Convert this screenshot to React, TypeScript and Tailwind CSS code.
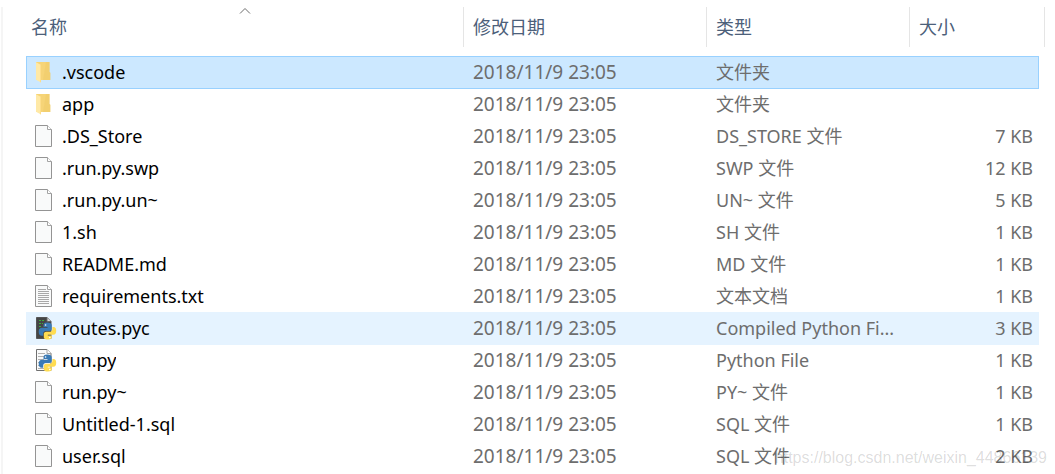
import React from "react";

type Kind = "folder" | "file" | "text" | "pyc" | "py";

interface Entry {
  name: string;
  kind: Kind;
  type: string;
  size: string;
  state?: "selected" | "hover";
}

const MODIFIED = "2018/11/9 23:05";

const entries: Entry[] = [
  { name: ".vscode", kind: "folder", type: "文件夹", size: "", state: "selected" },
  { name: "app", kind: "folder", type: "文件夹", size: "" },
  { name: ".DS_Store", kind: "file", type: "DS_STORE 文件", size: "7 KB" },
  { name: ".run.py.swp", kind: "file", type: "SWP 文件", size: "12 KB" },
  { name: ".run.py.un~", kind: "file", type: "UN~ 文件", size: "5 KB" },
  { name: "1.sh", kind: "file", type: "SH 文件", size: "1 KB" },
  { name: "README.md", kind: "file", type: "MD 文件", size: "1 KB" },
  { name: "requirements.txt", kind: "text", type: "文本文档", size: "1 KB" },
  { name: "routes.pyc", kind: "pyc", type: "Compiled Python Fi...", size: "3 KB", state: "hover" },
  { name: "run.py", kind: "py", type: "Python File", size: "1 KB" },
  { name: "run.py~", kind: "file", type: "PY~ 文件", size: "1 KB" },
  { name: "Untitled-1.sql", kind: "file", type: "SQL 文件", size: "1 KB" },
  { name: "user.sql", kind: "file", type: "SQL 文件", size: "2 KB" },
];

function FolderIcon() {
  return (
    <svg viewBox="0 0 20 24" className="h-6 w-5" aria-hidden="true">
      <path d="M1 2h13.500v10l.8.8v7.200H1z" fill="#f6d477" />
      <path d="M11 2h3.500v10l.8.8v7.200H8z" fill="#efcb69" opacity=".55" />
      <path d="M1 2.200 6 5v17.500L1 19.800z" fill="#ffe9a6" />
      <path d="M6 5v17.500l-1-.6V4.400z" fill="#fdde8c" />
    </svg>
  );
}

function PythonMark() {
  return (
    <g>
      <path
        d="M12.300 6.500c-3 0-3.800 1.200-3.800 2.700V11h4v.8H7c-2 0-3.300 1.500-3.300 4s1.200 3.900 3 3.900h1.500v-2.200c0-1.500 1.200-2.600 2.700-2.600h3.600c1.300 0 2.200-1 2.200-2.200V9.200c0-1.700-1.700-2.700-4.400-2.700z"
        fill="#3a7ab5"
      />
      <path
        d="M13 23.500c3 0 3.800-1.200 3.800-2.300v-1.700h-4v-.8h5.600c1.800 0 2.800-1.500 2.800-4s-1-3.700-2.600-3.700h-1.200v2.200c0 1.500-1.200 2.600-2.700 2.600h-3.600c-1.300 0-2.300 1-2.300 2.200v3.200c0 1.700 1.500 2.300 4.200 2.300z"
        fill="#ffdc51"
      />
      <circle cx="10.600" cy="9" r=".8" fill="#fff" />
      <circle cx="14.800" cy="21.500" r=".8" fill="#fff" />
    </g>
  );
}

function PageIcon({ kind }: { kind: Kind }) {
  const dark = kind === "pyc";
  const python = kind === "py" || dark;
  return (
    <svg viewBox="0 0 22 24" className="h-6 w-[22px]" aria-hidden="true">
      <path
        d={python ? "M1.500 1.500h10.500l4 4v17h-14.500z" : "M.5 1.500h12l4 4v17H.5z"}
        fill={dark ? "#454545" : "#f9fafa"}
        stroke={dark ? "#555" : python ? "#707070" : "#949494"}
      />
      <path
        d={python ? "M12 1.500v4h4" : "M12.500 1.500v4h4"}
        fill={dark ? "#d8d8d8" : "#fff"}
        stroke={dark ? "#666" : "#a3a3a3"}
      />
      {kind === "text" && (
        <path d="M3 5.500h8M3 7.500h11M3 9.500h11M3 11.500h11M3 13.500h11M3 15.500h11M3 17.500h11M3 19.500h11" stroke="#a8a8a8" />
      )}
      {kind === "py" && <path d="M3 5.500h7M3 8.500h10M3 11.500h6M3 14.500h3M3 17.500h3M3 20.500h6" stroke="#b0b0b0" />}
      {dark && (
        <path d="M4 4.500h6M4 7.500h4M4 10.500h3M4 13.500h2" stroke="#3fae3f" strokeDasharray="2 1" />
      )}
      {python && <PythonMark />}
    </svg>
  );
}

const rowFill = {
  selected:
    "bg-[#cce8ff] shadow-[inset_0_1px_0_#99d1ff,0_1px_0_#99d1ff] first:shadow-[inset_1px_1px_0_#99d1ff,0_1px_0_#99d1ff] nth-4:shadow-[inset_-1px_1px_0_#99d1ff,0_1px_0_#99d1ff]",
  hover: "bg-[#e5f3ff] shadow-[0_1px_0_#e5f3ff]",
  none: "",
};

function Row({ entry }: { entry: Entry }) {
  const fill = rowFill[entry.state ?? "none"];
  return (
    <tr className="h-8 text-[#6d6d6d]">
      <td className={`p-0 ${fill}`}>
        <div className="flex items-center pl-[9px] text-black">
          <span className="flex w-[27px] shrink-0">
            {entry.kind === "folder" ? <FolderIcon /> : <PageIcon kind={entry.kind} />}
          </span>
          <span className="truncate">{entry.name}</span>
        </div>
      </td>
      <td className={`truncate py-0 pr-2 pl-[9px] text-[19px] ${fill}`}>{MODIFIED}</td>
      <td className={`truncate py-0 pr-2 pl-[9px] ${fill}`}>{entry.type}</td>
      <td className={`truncate py-0 pr-1.5 pl-[9px] text-right ${fill}`}>{entry.size}</td>
    </tr>
  );
}

const heading = "border-r border-[#e5e5e5] py-0 pr-2 text-left font-normal";

export default function App() {
  return (
    <div className="bg-white pt-[7px] font-['Noto_Sans','Noto_Sans_CJK_SC',sans-serif] text-[18px] leading-6">
      <main className="relative ml-px overflow-hidden border-l-2 border-[#f5f5f5] pr-2.5 pb-0.5 pl-[23px]">
        <table className="w-full table-fixed border-separate border-spacing-0">
          <colgroup>
            <col />
            <col className="w-[243px]" />
            <col className="w-[203px]" />
            <col className="w-[129px]" />
            <col className="w-1.5" />
          </colgroup>
          <thead className="text-[#4c607a]">
            <tr className="h-10">
              <th scope="col" aria-sort="ascending" className={`relative pl-[5px] ${heading}`}>
                名称
                <svg viewBox="0 0 12 7" className="absolute top-0 left-1/2 h-[7px] w-3 -translate-x-1/2" aria-hidden="true">
                  <path d="M1 6.500l5-5 5 5" fill="none" stroke="#6d6d6d" />
                </svg>
              </th>
              <th scope="col" className={`pl-[9px] ${heading}`}>修改日期</th>
              <th scope="col" className={`pl-[9px] ${heading}`}>类型</th>
              <th scope="col" className="py-0 pl-[9px] text-left font-normal">大小</th>
              <td className="border-r border-[#e5e5e5] p-0" />
            </tr>
          </thead>
          <tbody>
            <tr className="h-[9px]" aria-hidden="true">
              <td colSpan={5} className="p-0" />
            </tr>
            {entries.map((entry) => (
              <Row key={entry.name} entry={entry} />
            ))}
          </tbody>
        </table>
        <p className="pointer-events-none absolute right-2 bottom-1 font-['Liberation_Sans',sans-serif] text-[16px] text-black/15">
          https://blog.csdn.net/weixin_44866139
        </p>
      </main>
    </div>
  );
}
